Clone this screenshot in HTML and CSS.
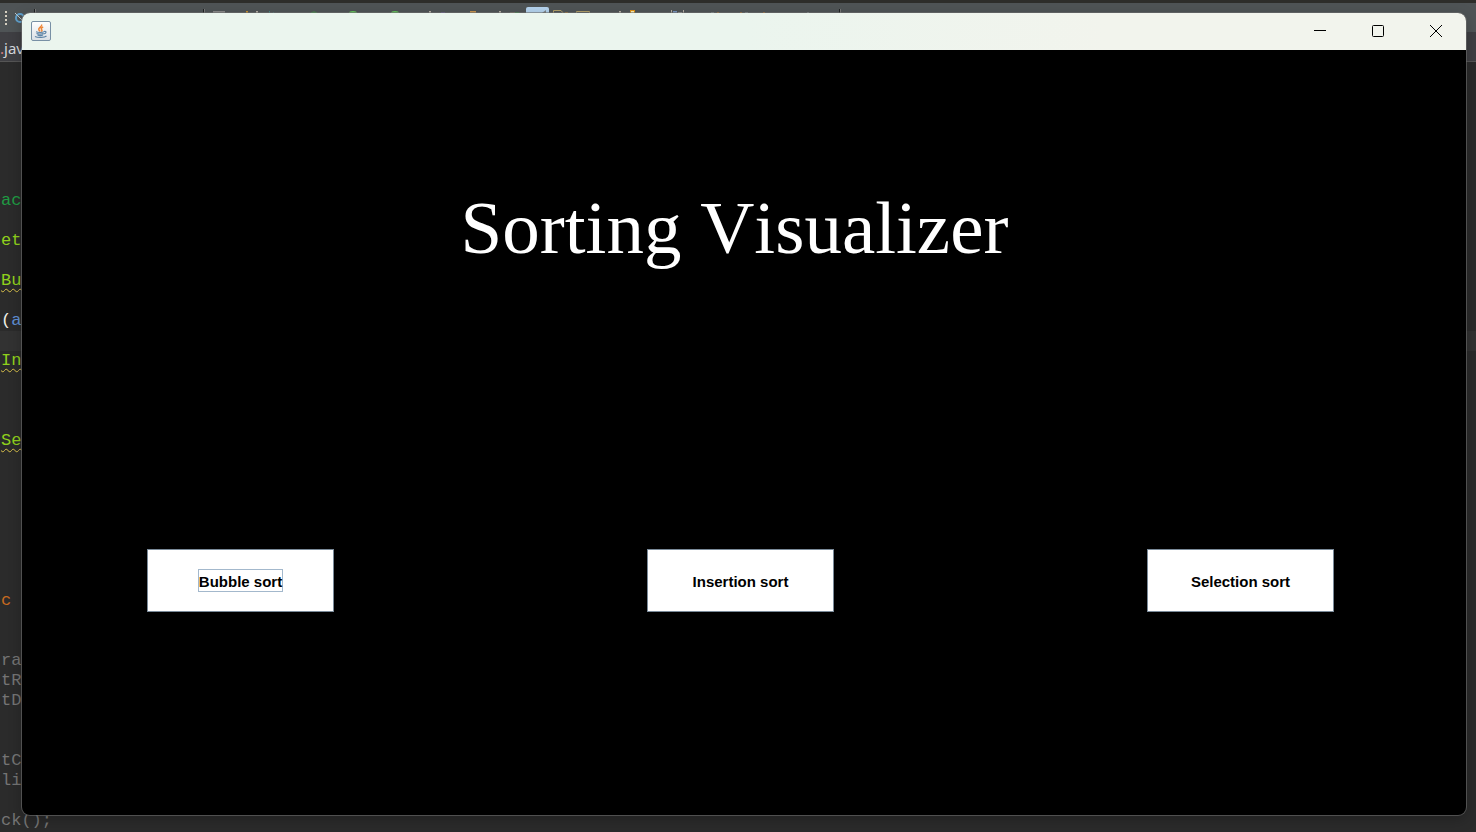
FILE: index.html
```html
<!DOCTYPE html>
<html lang="en">
<head>
<meta charset="utf-8">
<title>Sorting Visualizer</title>
<link rel="stylesheet" href="styles.css">
</head>
<body>
<div class="ide">
  <div class="toolbar">
    <svg class="tools" width="860" height="29" viewBox="0 3 860 29" aria-hidden="true">
      <path d="M6 11v15" stroke="#d5cfc0" stroke-width="2" stroke-dasharray="2 2"/>
      <circle cx="20" cy="18" r="4" fill="none" stroke="#5f9fca" stroke-width="2"/>
      <path d="M15 13l10 10" stroke="#b9c6cc" stroke-width="1"/>
      <path d="M34 9h1v6h-1zM203 9h1v6h-1zM839 9h1v6h-1z" fill="#1f2223"/>
      <path d="M35 9h1v6h-1zM204 9h1v6h-1zM840 9h1v6h-1z" fill="#777"/>
      <path d="M213 11h12v3h-12z" fill="#898989"/>
      <path d="M246 11h2v3h-2z" fill="#c9912f"/>
      <path d="M256 11h2v3h-2zM429 11h2v3h-2zM499 11h2v3h-2zM619 11h2v3h-2z" fill="#b5aea5"/>
      <path d="M269 11h1v3h-1zM273 12h1v2h-1z" fill="#438580"/>
      <ellipse cx="314" cy="13" rx="3" ry="1.500" fill="#3d9a45"/>
      <ellipse cx="353" cy="13" rx="4" ry="2" fill="#67c95d"/>
      <ellipse cx="395" cy="13" rx="4" ry="2" fill="#67c95d"/>
      <path d="M441 12h4v2h-4z" fill="#66589b"/>
      <path d="M470 11h6v3h-6z" fill="#c9954e"/>
      <path d="M510 12h5v2h-5z" fill="#837568"/>
      <path d="M515 12h4v2h-4z" fill="#318d43"/>
      <path d="M526 14V9q0-2 2-2h19q2 0 2 2v5z" fill="#b5d3ee"/>
      <path d="M542 13l4-3v4z" fill="#7e8587"/>
      <path d="M553.500 14v-3.500h7.500l3 3.500M576.500 14v-2.500h13v2.500" fill="none" stroke="#b09f69"/>
      <path d="M565 12h3v2h-3z" fill="#bd7a20"/>
      <path d="M630 10h5v4h-5z" fill="#dc9218"/>
      <path d="M631 11h3v2h-3z" fill="#fff0b0"/>
      <path d="M671 10h1v4h-1zM683 10h1v4h-1z" fill="#b5aea5"/>
      <path d="M673 11h4v3h-4z" fill="#7895bd"/>
      <path d="M678 12h4v2h-4z" fill="#aaa"/>
      <path d="M711 12h3v2h-3zM745 12h3v2h-3zM807 12h2v2h-2z" fill="#8c9699"/>
      <path d="M717 12h2v2h-2zM740 12h2v2h-2zM763 12h2v2h-2z" fill="#c57a27"/>
    </svg>
  </div>
  <div class="tabs"><span class="dirty">.</span>java</div>
  <div class="editor">
    <div class="line"></div><div class="line"></div><div class="line"></div>
    <div class="line"></div><div class="line"></div><div class="line"></div>
    <div class="line method">ac</div>
    <div class="line"></div>
    <div class="line name">et</div>
    <div class="line"></div>
    <div class="line name"><span class="warn">Bu</span></div>
    <div class="line"></div>
    <div class="line field"><span class="paren">(</span>a</div>
    <div class="line current"></div>
    <div class="line name"><span class="warn">In</span></div>
    <div class="line"></div><div class="line"></div><div class="line"></div>
    <div class="line name"><span class="warn">Se</span></div>
    <div class="line"></div><div class="line"></div><div class="line"></div>
    <div class="line"></div><div class="line"></div><div class="line"></div>
    <div class="line"></div>
    <div class="line keyword">c</div>
    <div class="line"></div><div class="line"></div>
    <div class="line">ra</div>
    <div class="line">tR</div>
    <div class="line">tD</div>
    <div class="line"></div><div class="line"></div>
    <div class="line">tC</div>
    <div class="line">li</div>
    <div class="line"></div>
    <div class="line">ck();</div>
  </div>
</div>

<main class="window">
  <header class="titlebar">
    <svg class="java" width="20" height="20" viewBox="0 0 20 20" aria-hidden="true">
      <defs><linearGradient id="tile" x1="0" y1="0" x2="0" y2="1"><stop offset="0" stop-color="#fff"/><stop offset="1" stop-color="#d9dfe5"/></linearGradient></defs>
      <rect x=".5" y=".5" width="19" height="19" rx="1.500" fill="url(#tile)" stroke="#7890a5"/>
      <path d="M10.500 3.500c1.300 2-3.500 3-2.700 5 .2.900 1 1.300 1.300 2M12.200 6c-2 .7-2.500 1.500-1.500 2.600.6.800.2 1.500-.4 2" fill="none" stroke="#ee8435" stroke-width="1.500"/>
      <path d="M5 10.800c2 .9 6.500.9 8 0M5.500 12.500c1.500.7 5.500.7 7 0M6.500 14c1.500.7 4 .7 5.500 0M13 10.500c2.800-.8 2.800 2-.5 2.500M4 15.500c3 1.500 9.500 1.200 11.500-.5" fill="none" stroke="#5d84a6" stroke-width="1.200"/>
    </svg>
    <div class="controls">
      <button class="control" type="button" aria-label="Minimize"><svg width="12" height="12" viewBox="0 0 12 12"><path d="M0 5.500h12"/></svg></button>
      <button class="control" type="button" aria-label="Maximize"><svg width="12" height="12" viewBox="0 0 12 12"><rect x=".5" y=".5" width="11" height="11" rx="1"/></svg></button>
      <button class="control" type="button" aria-label="Close"><svg width="12" height="12" viewBox="0 0 12 12"><path d="M0 0l12 12M12 0L0 12"/></svg></button>
    </div>
  </header>
  <section class="content">
    <h1 class="heading">Sorting Visualizer</h1>
    <div class="choices">
      <button class="choice" type="button"><span class="label focused">Bubble sort</span></button>
      <button class="choice" type="button"><span class="label">Insertion sort</span></button>
      <button class="choice" type="button"><span class="label">Selection sort</span></button>
    </div>
  </section>
</main>
</body>
</html>
```
FILE: styles.css
```css
* { box-sizing: border-box; }

body {
  margin: 0;
  height: 100vh;
  overflow: hidden;
  background: #2b2b2b;
}

.ide {
  height: 100%;
  overflow: hidden;
  border-top: 3px solid #2d2d2a;
}

.toolbar {
  height: 29px;
  background: #4f5456;
}

.tools { display: block; }

.tabs {
  height: 30px;
  border-bottom: 1px solid #555;
  background: #3f3f43;
  color: #d5d9dd;
  font: 15px/32px "Noto Sans", sans-serif;
}

.dirty { color: #d98080; }

.editor {
  padding-top: 9px;
  background: #2b2b2b;
  color: #747474;
  font: 17px/20px "Liberation Mono", monospace;
}

.line {
  height: 20px;
  padding-left: 1px;
}

.current { background: #323232; }
.method { color: #1f9a43; }
.name { color: #8fd01c; }
.field { color: #6090d5; }
.paren { color: #f2f2e8; }
.keyword { color: #c66a20; }

.warn {
  text-decoration: underline wavy #d8c04a 1px;
  text-underline-offset: 3px;
  text-decoration-skip-ink: none;
}

.window {
  position: absolute;
  inset: 13px 10px 17px 22px;
  display: flex;
  flex-direction: column;
  overflow: hidden;
  border-radius: 8px;
  background: #000;
  box-shadow: 0 0 0 1px rgba(110, 110, 110, .6), 0 4px 14px rgba(0, 0, 0, .25);
}

.titlebar {
  display: flex;
  align-items: center;
  justify-content: space-between;
  height: 37px;
  padding: 0 1px 1px 9px;
  background: linear-gradient(90deg, #ebf5ee, #ebf5ee 50%, #f2f4ed 75%);
}

.java { display: block; }

.controls { display: flex; }

.control {
  display: grid;
  place-items: center;
  width: 58px;
  height: 36px;
  padding: 0;
  border: 0;
  background: none;
}

.control svg {
  fill: none;
  stroke: #000;
}

.content {
  flex: 1;
  padding: 134px 132px 0 125px;
}

.heading {
  margin: 0;
  padding-right: 12px;
  color: #fff;
  font: 400 75px/88px "Liberation Serif", serif;
  font-kerning: none;
  text-align: center;
}

.choices {
  display: flex;
  justify-content: space-between;
  margin-top: 277px;
}

.choice {
  width: 187px;
  height: 63px;
  padding: 0;
  border: 1px solid #7a8a99;
  background: #fff;
  color: #000;
  font: 700 15px/19px "Liberation Sans", sans-serif;
}

.label {
  display: inline-block;
  padding-top: 2px;
  border: 1px solid transparent;
}

.focused { border-color: #a3b8cc; }
```
